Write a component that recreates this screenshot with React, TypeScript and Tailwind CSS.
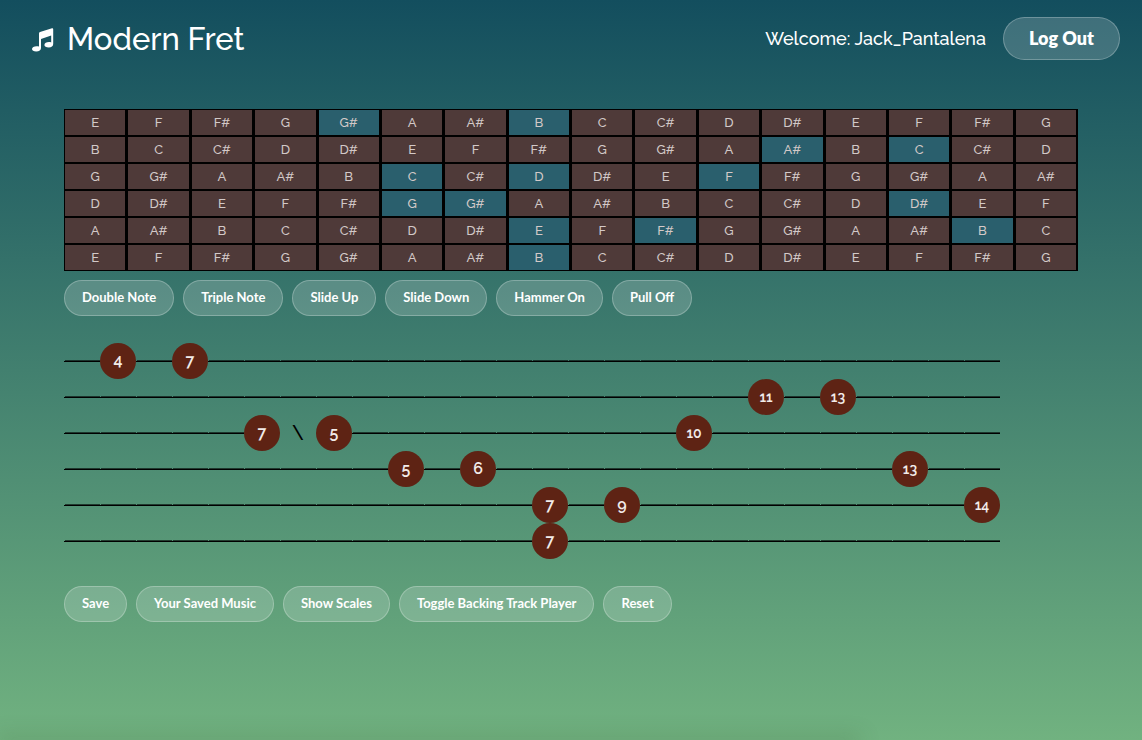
import type { ReactNode } from "react";

const CHROMATIC = ["C", "C#", "D", "D#", "E", "F", "F#", "G", "G#", "A", "A#", "B"];
const FRET_COUNT = 16;

const STRINGS = [
  { open: "E", active: [4, 7] },
  { open: "B", active: [11, 13] },
  { open: "G", active: [5, 7, 10] },
  { open: "D", active: [5, 6, 13] },
  { open: "A", active: [7, 9, 14] },
  { open: "E", active: [7] },
];

const TAB_COLUMNS = 26;

const TAB: Record<number, string>[] = [
  { 1: "4", 3: "7" },
  { 19: "11", 21: "13" },
  { 5: "7", 6: "\\", 7: "5", 17: "10" },
  { 9: "5", 11: "6", 23: "13" },
  { 13: "7", 15: "9", 25: "14" },
  { 13: "7" },
];

const TECHNIQUES = ["Double Note", "Triple Note", "Slide Up", "Slide Down", "Hammer On", "Pull Off"];
const ACTIONS = ["Save", "Your Saved Music", "Show Scales", "Toggle Backing Track Player", "Reset"];

function noteAt(open: string, fret: number) {
  return CHROMATIC[(CHROMATIC.indexOf(open) + fret) % CHROMATIC.length];
}

function NotesIcon() {
  return (
    <svg viewBox="0 0 22 24" className="h-6 w-[22px] shrink-0 fill-white" aria-hidden="true">
      <path d="M7 5.4Q7 4.3 8 4L20 .3Q21.2 0 21.2 1.2V16C21.2 18.2 19.4 19.6 16.8 19.6C14.2 19.6 12.4 18.7 12.4 17.1C12.4 15.4 14.4 14.1 17 14.1C17.9 14.1 18.6 14.2 19.2 14.4V7.4L9 11V20C9 22.2 7.2 23.6 4.2 23.6C1.6 23.6 0 22.6 0 21.1C0 19.4 2 18.2 4.6 18.2C5.6 18.2 6.4 18.3 7 18.5Z" />
    </svg>
  );
}

function PillButton({ children }: { children: ReactNode }) {
  return (
    <button
      type="button"
      className="h-9 cursor-pointer rounded-full border border-white/25 bg-white/18 px-[17px] pb-[2px] font-['Lato',sans-serif] text-[13px] leading-4 font-bold whitespace-nowrap text-white hover:bg-white/30"
    >
      {children}
    </button>
  );
}

function Fretboard() {
  return (
    <table className="w-full table-fixed border-separate border-spacing-0 text-[13px] leading-[25px] font-medium text-[#d3c9c8]">
      <tbody>
        {STRINGS.map(({ open, active }, row) => (
          <tr key={row}>
            {Array.from({ length: FRET_COUNT }, (_, fret) => (
              <td
                key={fret}
                className={`border border-r-2 border-black p-0 text-center ${
                  active.includes(fret) ? "bg-[#2a5f6d]" : "bg-[#4f3a39]"
                }`}
              >
                {noteAt(open, fret)}
              </td>
            ))}
          </tr>
        ))}
      </tbody>
    </table>
  );
}

function TabCell({ value }: { value?: string }) {
  if (value === undefined) {
    return (
      <div className="flex size-9 flex-col justify-center">
        <div className="ml-px h-px bg-black/60" />
        <div className="h-px bg-black" />
      </div>
    );
  }
  if (value === "\\") {
    return <div className="flex size-9 items-center justify-center text-xl font-medium text-black">{value}</div>;
  }
  return (
    <div
      className={`flex size-9 items-center justify-center rounded-full bg-[#5e2314] font-semibold text-[#f2ebe9] ${
        value.length > 1 ? "text-sm" : "text-base"
      }`}
    >
      {value}
    </div>
  );
}

function Tablature() {
  return (
    <div className="flex flex-col">
      {TAB.map((row, i) => (
        <div key={i} className="flex">
          {Array.from({ length: TAB_COLUMNS }, (_, col) => (
            <TabCell key={col} value={row[col]} />
          ))}
        </div>
      ))}
    </div>
  );
}

export default function App() {
  return (
    <div className="flex min-h-screen flex-col overflow-hidden bg-linear-to-b/srgb from-[#134e5e] to-[#71b280] font-['Raleway','Lato',sans-serif] text-white">
      <header className="flex items-start justify-between pt-[17px] pr-[22px] pl-8">
        <h1 className="flex items-center gap-[13px] text-[31px] leading-[45px] font-medium">
          <NotesIcon />
          Modern Fret
        </h1>
        <div className="flex items-center gap-[17px] text-lg font-medium">
          <span>Welcome: Jack_Pantalena</span>
          <button
            type="button"
            className="h-[43px] cursor-pointer rounded-full border border-white/25 bg-white/18 px-[25px] pb-[2px] font-['Lato',sans-serif] text-lg font-extrabold hover:bg-white/30"
          >
            Log Out
          </button>
        </div>
      </header>

      <main className="px-16 pt-[47px]">
        <Fretboard />
        <div className="mt-[9px] flex flex-wrap gap-[9px]">
          {TECHNIQUES.map((label) => (
            <PillButton key={label}>{label}</PillButton>
          ))}
        </div>
        <div className="mt-[27px]">
          <Tablature />
        </div>
        <div className="mt-[27px] flex flex-wrap gap-[9px]">
          {ACTIONS.map((label) => (
            <PillButton key={label}>{label}</PillButton>
          ))}
        </div>
      </main>

      <footer className="mt-auto h-px w-3/4 translate-y-px shadow-[0_0_20px_4px_rgba(60,90,50,0.3)]" />
    </div>
  );
}
